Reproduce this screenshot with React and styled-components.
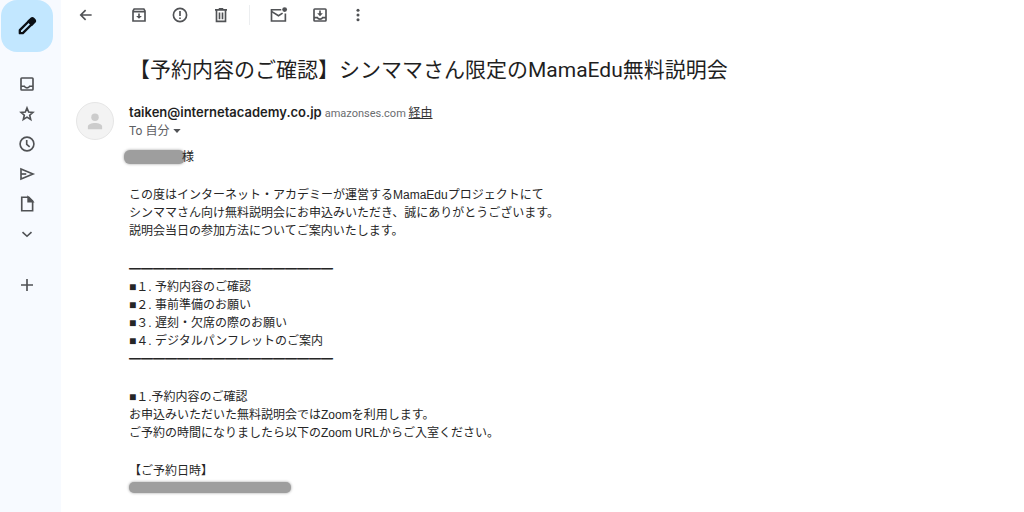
import React from 'react';
import styled, { createGlobalStyle } from 'styled-components';

const railItems = [
  { name: 'inbox', label: '受信トレイ' },
  { name: 'star', label: 'スター付き' },
  { name: 'clock', label: 'スヌーズ中' },
  { name: 'send', label: '送信済み' },
  { name: 'file', label: '下書き' },
  { name: 'chevron', label: 'もっと見る' },
];

const messageActions = [
  { name: 'archive', label: 'アーカイブ' },
  { name: 'report', label: '迷惑メールを報告' },
  { name: 'trash', label: '削除' },
];

const moveActions = [
  { name: 'unread', label: '未読にする' },
  { name: 'moveTo', label: '移動' },
];

const agenda = [
  '■１. 予約内容のご確認',
  '■２. 事前準備のお願い',
  '■３. 遅刻・欠席の際のお願い',
  '■４. デジタルパンフレットのご案内',
];

const rule = '━'.repeat(17);

// everything is drawn on a 24 unit grid
const shapes = {
  pencil: (
    <>
      <path d="M3.4 20.6V17L15 5.4 18.6 9 7 20.6z" fill="none" stroke="currentColor" strokeWidth="2.8" strokeLinejoin="round" />
      <path d="M13.5 6.5L17 3c.8-.8 1.9-.8 2.7 0l1.5 1.5c.8.8.8 1.9 0 2.7l-3.5 3.5z" fill="currentColor" />
    </>
  ),
  inbox: (
    <>
      <rect x="4" y="4" width="16" height="16" rx="1" />
      <path d="M4 15h4.5c.6 1.4 1.9 2.2 3.5 2.2s2.9-.8 3.5-2.2H20" />
    </>
  ),
  star: (
    <path d="M12 4l2.2 5.3 5.7.5-4.3 3.8 1.3 5.6-4.9-3-4.9 3 1.3-5.6-4.3-3.8 5.7-.5z" />
  ),
  clock: (
    <>
      <circle cx="12" cy="12" r="9.2" />
      <path d="M11.6 6.5v6l4 3.4" />
    </>
  ),
  send: (
    <>
      <path d="M4 5.2L20 12 4 18.8z" />
      <path d="M4 12h7" />
    </>
  ),
  file: (
    <>
      <path d="M5 3h9.5L19.5 8v13H5z" />
      <path d="M13.5 3v6h6z" fill="currentColor" />
    </>
  ),
  chevron: <path d="M6 9.5l6 5.5 6-5.5" />,
  plus: <path d="M12 4v16M4 12h16" />,
  back: <path d="M19.5 12H5M11.5 5.500L5 12l6.500 6.500" />,
  archive: (
    <>
      <path d="M4 6.5L5.5 4h13L20 6.5V20H4z" />
      <path d="M4 7.5h16M12 10v6" />
      <path d="M8.2 13.2h7.6L12 17z" fill="currentColor" stroke="none" />
    </>
  ),
  report: (
    <>
      <circle cx="12" cy="12" r="8.8" />
      <path d="M12 6.8v6.4M12 15.2v2" />
    </>
  ),
  trash: (
    <>
      <path d="M6 6v14.5h12V6M4 5.2h16M9 3.6h6" />
      <path d="M10 8.5v9M14 8.5v9" />
    </>
  ),
  unread: (
    <>
      <path d="M15 5H2v15h18.5V10" />
      <path d="M2.5 7.5l8.8 5.5 5.5-3.5" />
      <circle cx="19.5" cy="4.8" r="3.2" fill="currentColor" stroke="none" />
    </>
  ),
  moveTo: (
    <>
      <rect x="4" y="4" width="16" height="16" rx="1" />
      <path d="M4 15.5h4.500c.6 1.3 1.9 2 3.5 2s2.900-.7 3.500-2H20M12 6v5" />
      <path d="M8.2 9.8h7.6l-3.800 4z" fill="currentColor" stroke="none" />
    </>
  ),
  more: (
    <g fill="currentColor" stroke="none">
      <circle cx="12" cy="4" r="2.6" />
      <circle cx="12" cy="12" r="2.6" />
      <circle cx="12" cy="20" r="2.6" />
    </g>
  ),
  caret: <path d="M1 6h22L12 18z" fill="currentColor" stroke="none" />,
  person: (
    <g fill="currentColor" stroke="none">
      <circle cx="12" cy="7" r="5" />
      <path d="M2.5 23v-3.500c0-3.500 4.800-5 9.500-5s9.500 1.500 9.500 5V23z" />
    </g>
  ),
};

function Icon({ name, size = 18 }) {
  return (
    <Svg viewBox="0 0 24 24" width={size} height={size} aria-hidden="true">
      {shapes[name]}
    </Svg>
  );
}

function App() {
  return (
    <>
      <GlobalStyle />
      <Page>
        <Rail>
          <Compose type="button" aria-label="作成">
            <Icon name="pencil" size={20} />
          </Compose>
          <RailList>
            {railItems.map(item => (
              <RailLink key={item.name} href="#" aria-label={item.label}>
                <Icon name={item.name} />
              </RailLink>
            ))}
          </RailList>
          <IconButton type="button" aria-label="ラベルを作成">
            <Icon name="plus" />
          </IconButton>
        </Rail>
        <Main>
          <Toolbar>
            <IconButton type="button" aria-label="戻る">
              <Icon name="back" />
            </IconButton>
            <ToolGroup>
              {messageActions.map(item => (
                <IconButton key={item.name} type="button" aria-label={item.label}>
                  <Icon name={item.name} />
                </IconButton>
              ))}
            </ToolGroup>
            <Divider />
            <ToolGroup>
              {moveActions.map(item => (
                <IconButton key={item.name} type="button" aria-label={item.label}>
                  <Icon name={item.name} />
                </IconButton>
              ))}
              <IconButton $narrow type="button" aria-label="その他">
                <Icon name="more" size={14} />
              </IconButton>
            </ToolGroup>
          </Toolbar>
          <Subject>【予約内容のご確認】シンママさん限定のMamaEdu無料説明会</Subject>
          <Message>
            <Avatar>
              <Icon name="person" />
            </Avatar>
            <div>
              <Sender>
                <Address>taiken@internetacademy.co.jp</Address>
                <Via>
                  amazonses.com <ViaLink href="#">経由</ViaLink>
                </Via>
              </Sender>
              <Recipient>
                To 自分
                <CaretButton type="button" aria-label="詳細を表示">
                  <Icon name="caret" size={8} />
                </CaretButton>
              </Recipient>
              <Body>
                <p><NameMask />様</p>
                <p>
                  この度はインターネット・アカデミーが運営するMamaEduプロジェクトにて<br />
                  シンママさん向け無料説明会にお申込みいただき、誠にありがとうございます。<br />
                  説明会当日の参加方法についてご案内いたします。
                </p>
                <div>
                  <Rule>{rule}</Rule>
                  {agenda.map(line => <div key={line}>{line}</div>)}
                  <Rule>{rule}</Rule>
                </div>
                <p>
                  ■１.予約内容のご確認<br />
                  お申込みいただいた無料説明会ではZoomを利用します。<br />
                  ご予約の時間になりましたら以下のZoom URLからご入室ください。
                </p>
                <p>
                  【ご予約日時】<br />
                  <DateMask />
                </p>
              </Body>
            </div>
          </Message>
        </Main>
      </Page>
    </>
  );
}

export default App;

const GlobalStyle = createGlobalStyle`
  * {
    box-sizing: border-box;
  }
  body {
    margin: 0;
    background: #ffffff;
    color: #262626;
    font-family: "Liberation Sans", "Noto Sans CJK JP", sans-serif;
    font-size: 12px;
  }
  p {
    margin: 0;
  }
`;
const Page = styled.div`
  display: flex;
  height: 100vh;
  overflow: hidden;
`;
const Rail = styled.nav`
  flex: none;
  display: flex;
  flex-direction: column;
  align-items: center;
  width: 61px;
  padding-right: 7px;
  background: #f7faff;
  color: #505255;
`;
const Compose = styled.button`
  display: flex;
  align-items: center;
  justify-content: center;
  width: 52px;
  height: 52px;
  padding: 0;
  border: 0;
  border-radius: 16px;
  background: #c2e7ff;
  color: #0b0f14;
`;
const RailList = styled.div`
  display: flex;
  flex-direction: column;
  gap: 10px;
  margin: 22px 0 31px;
`;
const RailLink = styled.a`
  display: flex;
  align-items: center;
  justify-content: center;
  width: 20px;
  height: 20px;
  color: inherit;
`;
const IconButton = styled.button`
  display: flex;
  align-items: center;
  justify-content: center;
  width: ${props => (props.$narrow ? '14px' : '20px')};
  height: 20px;
  padding: 0;
  border: 0;
  background: none;
  color: #505255;
`;
const Svg = styled.svg`
  display: block;
  flex: none;
  fill: none;
  stroke: currentColor;
  stroke-width: 2.2;
`;
const Main = styled.main`
  flex: 1;
  min-width: 0;
  padding: 0 15px;
`;
const Toolbar = styled.div`
  display: flex;
  align-items: center;
  height: 30px;
`;
const ToolGroup = styled.div`
  display: flex;
  gap: 21px;

  ${IconButton} + & {
    margin-left: 33px;
  }
`;
const Divider = styled.div`
  width: 1px;
  height: 20px;
  margin: 0 19px 0 18px;
  background: #eceef0;
`;
const Subject = styled.h1`
  margin: 25px 0 17px 53px;
  color: #1f1f1f;
  font-family: Roboto, "Noto Sans CJK JP", sans-serif;
  font-size: 21px;
  font-weight: 400;
  line-height: 30px;
`;
const Message = styled.article`
  display: grid;
  grid-template-columns: 38px 1fr;
  column-gap: 15px;
`;
const Avatar = styled.div`
  display: flex;
  align-items: center;
  justify-content: center;
  width: 38px;
  height: 38px;
  border: 1px solid #e6e6e6;
  border-radius: 50%;
  background: #f3f3f3;
  color: #cccccc;
`;
const Sender = styled.div`
  display: flex;
  align-items: baseline;
  gap: 3px;
  height: 20px;
  font-family: Roboto, "Noto Sans CJK JP", sans-serif;
  line-height: 20px;
`;
const Address = styled.strong`
  color: #1f1f1f;
  font-family: Inter, sans-serif;
  font-size: 13px;
  font-weight: 600;
`;
const Via = styled.span`
  color: #6b6d70;
  font-size: 11px;
`;
const ViaLink = styled.a`
  color: #333333;
  font-size: 12px;
`;
const Recipient = styled.div`
  display: flex;
  align-items: center;
  height: 18px;
  color: #5e6063;
  font-family: Roboto, "Noto Sans CJK JP", sans-serif;
  line-height: 18px;
`;
const CaretButton = styled.button`
  margin-left: 4px;
  padding: 0;
  border: 0;
  background: none;
  color: #505255;
`;
const Body = styled.div`
  display: flex;
  flex-direction: column;
  gap: 20px;
  margin-top: 8px;
  line-height: 18px;
`;
const Rule = styled.div`
  height: 18px;
  font-family: "Noto Sans CJK JP", sans-serif;
`;
// marker strokes over the private parts
const NameMask = styled.span`
  display: inline-block;
  width: 61px;
  height: 14px;
  margin: 0 -3px 0 -5px;
  border-radius: 6px;
  background: #9e9e9e;
  box-shadow: 0 0 3px #9e9e9e;
  vertical-align: text-bottom;
`;
const DateMask = styled.span`
  display: inline-block;
  width: 162px;
  height: 11px;
  border-radius: 5px;
  background: #9e9e9e;
  box-shadow: 0 0 3px #9e9e9e;
  vertical-align: baseline;
`;
